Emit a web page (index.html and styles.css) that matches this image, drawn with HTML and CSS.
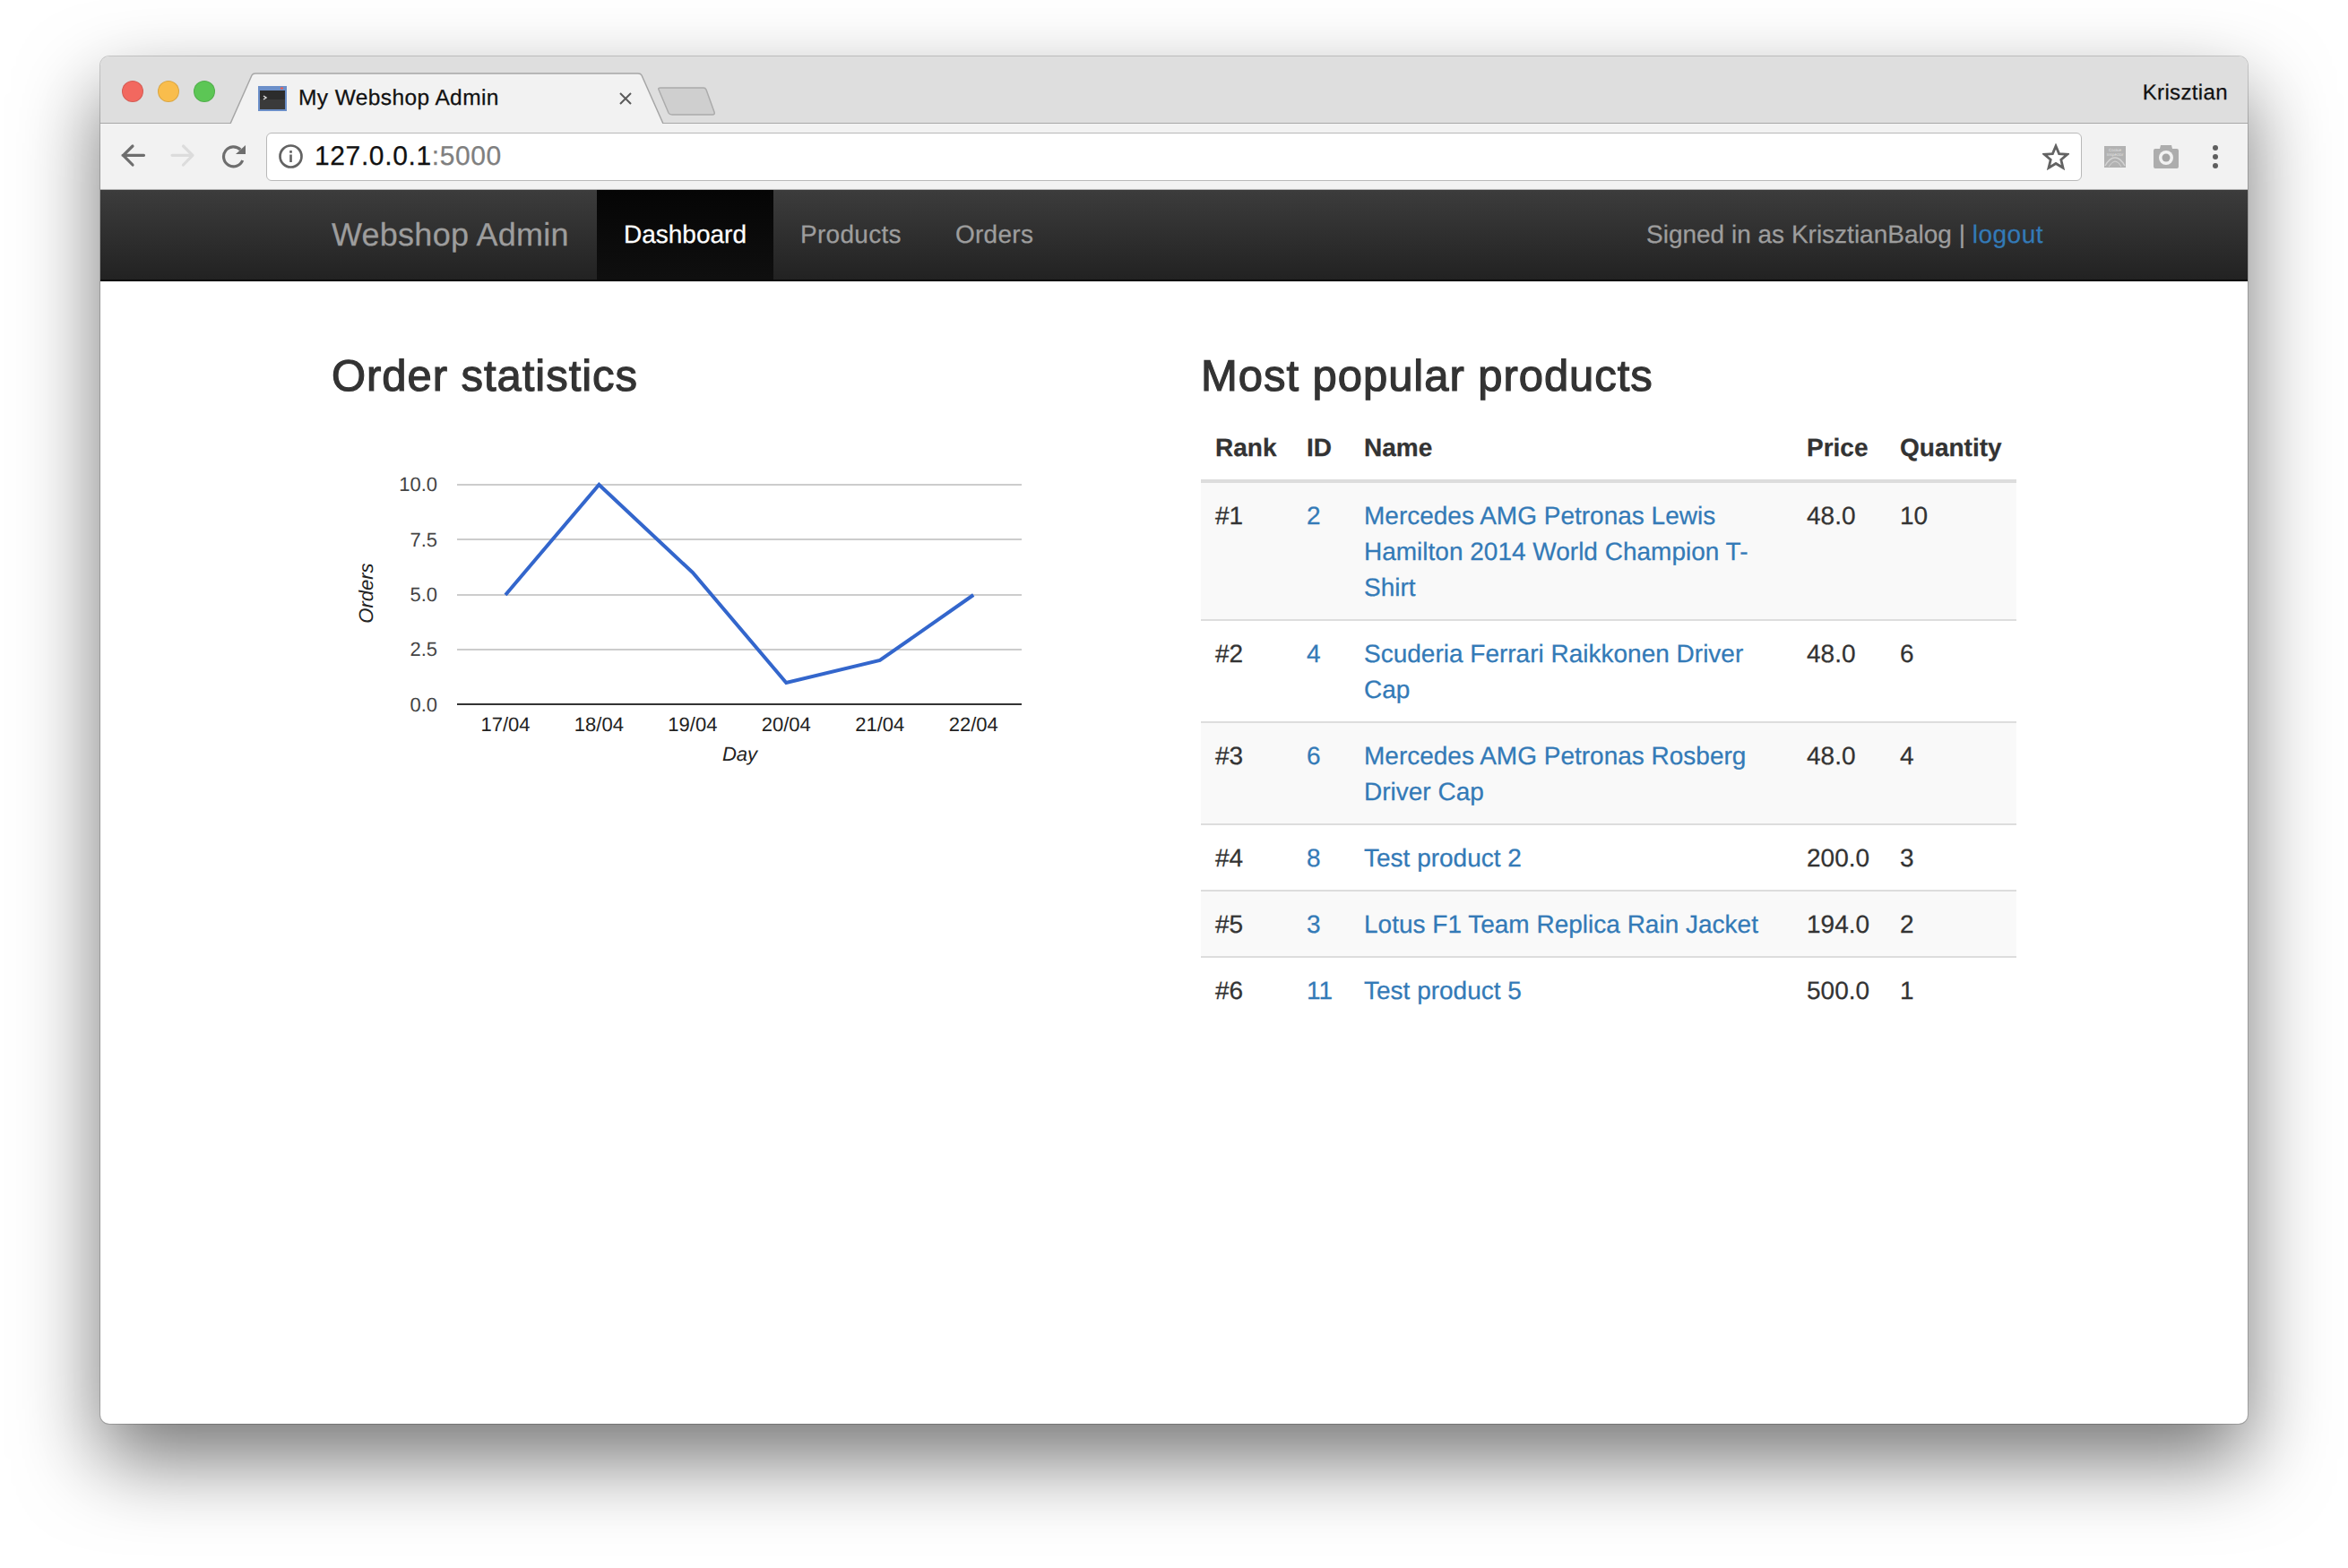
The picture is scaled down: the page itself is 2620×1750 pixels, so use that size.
FILE: index.html
```html
<!DOCTYPE html>
<html lang="en">
<head>
  <meta charset="UTF-8">
  <title>My Webshop Admin</title>
  <link rel="stylesheet" href="styles.css">
</head>
<body>
  <div class="window">
    <div class="titlebar">
      <div class="lights">
        <span class="light red"></span>
        <span class="light yellow"></span>
        <span class="light green"></span>
      </div>
      <div class="tab">
        <svg class="tab-shape" width="486" height="57" viewBox="0 0 486 57">
          <path d="M1 57 L25 3 Q26 1 29 1 L456 1 Q459 1 460 3 L484 57" fill="#f2f2f2" stroke="#a6a6a6" stroke-width="1.5"/>
        </svg>
        <svg class="favicon" width="32" height="28" viewBox="0 0 32 28">
          <rect width="32" height="28" fill="#6b8fc9"/>
          <rect x="2" y="5" width="28" height="21" fill="#2c2c2c"/>
          <rect x="2" y="15" width="28" height="11" fill="#3a3a3a"/>
          <path d="M6 11 L9 13 L6 15" fill="none" stroke="#ddd" stroke-width="1.5"/>
          <rect x="25" y="1.5" width="3" height="2" fill="#f05a4a"/>
        </svg>
        <span class="tab-title">My Webshop Admin</span>
        <svg class="tab-close" width="16" height="16" viewBox="0 0 16 16">
          <path d="M2 2 L14 14 M14 2 L2 14" stroke="#5a5a5a" stroke-width="2"/>
        </svg>
      </div>
      <svg class="newtab" width="66" height="33" viewBox="0 0 66 33">
        <path d="M2 3 Q1 1 4 1 L52 1 Q54 1 55 3 L64 28 Q65 31 62 31 L17 31 Q14 31 13 29 Z" fill="#cfcfcf" stroke="#ababab" stroke-width="1.5"/>
      </svg>
      <span class="username">Krisztian</span>
    </div>

    <div class="toolbar">
      <svg class="tool" width="32" height="32" viewBox="0 0 32 32">
        <path d="M28.500 14.300 H5 M16 4 L5.500 14.300 L16 25" fill="none" stroke="#6e6e6e" stroke-width="3.200" stroke-linecap="round" stroke-linejoin="round"/>
      </svg>
      <svg class="tool" width="32" height="32" viewBox="0 0 32 32">
        <path d="M4 14.300 H27 M16.500 4 L27 14.300 L16.500 25" fill="none" stroke="#dcdcdc" stroke-width="3.200" stroke-linecap="round" stroke-linejoin="round"/>
      </svg>
      <svg class="tool" width="32" height="32" viewBox="0 0 32 32">
        <path d="M26.700 20 A11 11 0 1 1 24.300 8" fill="none" stroke="#6e6e6e" stroke-width="3.200"/>
        <path d="M30 3 V13 H19 Z" fill="#6e6e6e"/>
      </svg>
      <div class="omnibox">
        <svg class="info" width="27" height="27" viewBox="0 0 27 27">
          <circle cx="13.500" cy="13.500" r="12" fill="none" stroke="#636363" stroke-width="2.700"/>
          <rect x="12.200" y="11.500" width="2.600" height="8.500" fill="#636363"/>
          <rect x="12.200" y="7" width="2.600" height="2.800" fill="#636363"/>
        </svg>
        <span class="url">127.0.0.1<span class="url-port">:5000</span></span>
        <svg class="star" width="30" height="30" viewBox="0 0 30 30">
          <path d="M15 3 L18.600 11.600 L27.800 12.300 L20.800 18.300 L23 27.300 L15 22.500 L7 27.300 L9.200 18.300 L2.200 12.300 L11.400 11.600 Z" fill="none" stroke="#636363" stroke-width="2.800"/>
        </svg>
      </div>
      <svg class="ext-cookie" width="24" height="24" viewBox="0 0 24 24">
        <rect width="24" height="24" fill="#b2b2b2"/>
        <text x="12" y="6" class="ext-text">Cookie</text>
        <text x="12" y="11" class="ext-text">Inspector</text>
        <path d="M1 22 Q6 13 12 13 Q18 13 23 22" fill="none" stroke="#d4d4d4" stroke-width="1.500"/>
        <path d="M5 23 Q9 17 12 17 Q16 17 19 23" fill="none" stroke="#d4d4d4"/>
      </svg>
      <svg class="ext-camera" width="30" height="27" viewBox="0 0 30 27">
        <path d="M1 7 Q1 5 3 5 H8 L9 1 H21 L22 5 H27 Q29 5 29 7 V25 Q29 27 27 27 H3 Q1 27 1 25 Z" fill="#adadad"/>
        <circle cx="15" cy="15" r="8" fill="#f2f2f2"/>
        <circle cx="15" cy="15" r="4.500" fill="#a4a4a4"/>
      </svg>
      <span class="dots"><i></i><i></i><i></i></span>
    </div>

    <nav class="navbar">
      <div class="container navbar-inner">
        <a class="brand">Webshop Admin</a>
        <a class="nav-link active">Dashboard</a>
        <a class="nav-link">Products</a>
        <a class="nav-link">Orders</a>
        <p class="signed-in">Signed in as KrisztianBalog | <a class="link logout">logout</a></p>
      </div>
    </nav>

    <main class="container columns">
      <section class="col">
        <h3>Order statistics</h3>
        <svg class="chart" width="880" height="420" viewBox="0 0 880 420">
          <g class="grid">
            <line x1="140" y1="77" x2="770" y2="77"/>
            <line x1="140" y1="138" x2="770" y2="138"/>
            <line x1="140" y1="200" x2="770" y2="200"/>
            <line x1="140" y1="261" x2="770" y2="261"/>
          </g>
          <line class="axis" x1="140" y1="322" x2="770" y2="322"/>
          <polyline class="series" points="194,200 298.400,77 402.900,175 507.300,298 611.800,273 716.200,200"/>
          <g class="ticks-y">
            <text x="118" y="84">10.0</text>
            <text x="118" y="146">7.5</text>
            <text x="118" y="207">5.0</text>
            <text x="118" y="268">2.5</text>
            <text x="118" y="330">0.0</text>
          </g>
          <g class="ticks-x">
            <text x="194" y="352">17/04</text>
            <text x="298.400" y="352">18/04</text>
            <text x="402.900" y="352">19/04</text>
            <text x="507.300" y="352">20/04</text>
            <text x="611.800" y="352">21/04</text>
            <text x="716.200" y="352">22/04</text>
          </g>
          <text class="axis-title" x="455.500" y="385">Day</text>
          <text class="axis-title" transform="translate(46 198) rotate(-90)">Orders</text>
        </svg>
      </section>
      <section class="col">
        <h3>Most popular products</h3>
        <table class="products">
          <thead>
            <tr>
              <th class="c-rank">Rank</th>
              <th class="c-id">ID</th>
              <th class="c-name">Name</th>
              <th class="c-price">Price</th>
              <th class="c-qty">Quantity</th>
            </tr>
          </thead>
          <tbody>
            <tr>
              <td>#1</td><td><a class="link">2</a></td>
              <td><a class="link">Mercedes AMG Petronas Lewis Hamilton 2014 World Champion T-Shirt</a></td>
              <td>48.0</td><td>10</td>
            </tr>
            <tr>
              <td>#2</td><td><a class="link">4</a></td>
              <td><a class="link">Scuderia Ferrari Raikkonen Driver Cap</a></td>
              <td>48.0</td><td>6</td>
            </tr>
            <tr>
              <td>#3</td><td><a class="link">6</a></td>
              <td><a class="link">Mercedes AMG Petronas Rosberg Driver Cap</a></td>
              <td>48.0</td><td>4</td>
            </tr>
            <tr>
              <td>#4</td><td><a class="link">8</a></td>
              <td><a class="link">Test product 2</a></td>
              <td>200.0</td><td>3</td>
            </tr>
            <tr>
              <td>#5</td><td><a class="link">3</a></td>
              <td><a class="link">Lotus F1 Team Replica Rain Jacket</a></td>
              <td>194.0</td><td>2</td>
            </tr>
            <tr>
              <td>#6</td><td><a class="link">11</a></td>
              <td><a class="link">Test product 5</a></td>
              <td>500.0</td><td>1</td>
            </tr>
          </tbody>
        </table>
      </section>
    </main>
  </div>
</body>
</html>
```

FILE: styles.css
```css
* {
  box-sizing: border-box;
}
body {
  margin: 0;
  height: 1750px;
  overflow: hidden;
  padding: 63px 0 0 112px;
  background-color: #fff;
  font-family: "Liberation Sans", Arial, sans-serif;
  font-size: 28px;
  line-height: 40px;
  color: #333;
  text-rendering: geometricPrecision;
  -webkit-text-stroke: 0.25px;
}

/* browser window */
.window {
  width: 2396px;
  height: 1526px;
  background-color: #fff;
  border-radius: 10px;
  box-shadow: 0 40px 90px rgba(0,0,0,0.54), 0 0 0 1px rgba(0,0,0,0.18);
}
.titlebar {
  display: flex;
  height: 75px;
  padding-left: 24px;
  background-color: #dedede;
  border-bottom: 1.5px solid #a8a8a8;
  border-radius: 10px 10px 0 0;
}
.lights {
  display: flex;
  gap: 16px;
  margin-top: 27px;
}
.light {
  width: 24px;
  height: 24px;
  border-radius: 50%;
  border: 1px solid rgba(0,0,0,0.12);
}
.red { background-color: #f2685f; }
.yellow { background-color: #f9bd4c; }
.green { background-color: #5cc655; }
.tab {
  position: relative;
  display: flex;
  align-items: center;
  width: 486px;
  height: 57px;
  margin: 18px 0 -1px 16px;
  padding: 0 36px 0 32px;
}
.tab-shape {
  position: absolute;
  left: 0;
  top: 0;
}
.favicon, .tab-title, .tab-close {
  position: relative;
}
.tab-title {
  margin-left: 13px;
  font-size: 24.500px;
  letter-spacing: 0.4px;
  color: #111;
}
.tab-close {
  margin-left: auto;
}
.newtab {
  margin: 34px 0 0 -9px;
}
.username {
  margin: 21px 22px 0 auto;
  font-size: 24px;
  letter-spacing: 0.37px;
  color: #111;
}

.toolbar {
  display: flex;
  align-items: center;
  height: 74px;
  padding-left: 20px;
  background-color: #f2f2f2;
  border-bottom: 1.5px solid #b4b4b4;
}
.tool {
  margin-right: 24px;
}
.tool:nth-child(3) {
  margin-right: 21px;
}
.omnibox {
  display: flex;
  align-items: center;
  width: 2026px;
  height: 54px;
  padding: 0 13px 0 13px;
  background-color: #fff;
  border: 1.5px solid #b9b9b9;
  border-radius: 6px;
}
.info {
  margin-right: 13px;
}
.url {
  font-size: 30px;
  letter-spacing: 0.62px;
  color: #111;
}
.url-port {
  color: #7f7f7f;
}
.star {
  margin-left: auto;
}
.ext-cookie {
  margin-left: 25px;
}
.ext-text {
  font-size: 4.500px;
  text-anchor: middle;
  fill: #e2e2e2;
  -webkit-text-stroke: 0;
}
.ext-camera {
  margin-left: 30px;
}
.dots {
  display: flex;
  flex-direction: column;
  gap: 4px;
  margin-left: 37px;
}
.dots i {
  display: block;
  width: 6px;
  height: 6px;
  border-radius: 50%;
  background-color: #5f5f5f;
}

/* navbar */
.container {
  width: 1940px;
  margin: 0 auto;
}
.navbar {
  height: 102px;
  background-image: linear-gradient(to bottom, #3c3c3c, #222);
  border-bottom: 2px solid #080808;
}
.navbar-inner {
  display: flex;
  height: 100px;
  padding-left: 30px;
  align-items: stretch;
  line-height: 100px;
  color: #9d9d9d;
}
.brand {
  width: 296px;
  font-size: 36px;
  letter-spacing: 0.25px;
}
.nav-link {
  padding: 0 30px;
  letter-spacing: 0.3px;
}
.nav-link.active {
  background-color: #080808;
  background-image: linear-gradient(to bottom, #050505, #0f0f0f);
  color: #fff;
  letter-spacing: 0;
}
.signed-in {
  margin: 0 0 0 auto;
}
.link {
  color: #337ab7;
}
.logout {
  letter-spacing: 0.5px;
}

/* page content */
.columns {
  display: flex;
}
.col {
  width: 970px;
  padding: 80px 30px 0;
}
h3 {
  margin: 0 0 16px;
  font-size: 49px;
  font-weight: 500;
  line-height: 53px;
  letter-spacing: 0.95px;
  color: #333;
  -webkit-text-stroke: 1.2px;
}
.chart {
  display: block;
  margin-top: 17px;
}
.grid line {
  stroke: #ccc;
  stroke-width: 2;
}
.axis {
  stroke: #333;
  stroke-width: 2;
}
.series {
  fill: none;
  stroke: #3366cc;
  stroke-width: 4;
}
.chart text {
  font-size: 22px;
  fill: #222;
}
.ticks-y text {
  text-anchor: end;
  fill: #444;
}
.ticks-x text {
  text-anchor: middle;
}
.chart .axis-title {
  font-style: italic;
  text-anchor: middle;
}

/* products table */
.products {
  width: 910px;
  table-layout: fixed;
  border-collapse: separate;
  border-spacing: 0;
}
.c-rank { width: 102px; }
.c-id { width: 64px; }
.c-name { width: 494px; }
.c-price { width: 104px; }
.c-qty { width: 146px; }
.products th {
  padding: 17px 16px 15px;
  text-align: left;
  border-bottom: 4px solid #ddd;
}
.products td {
  padding: 17px 16px 15px;
  vertical-align: top;
}
.products tbody tr + tr td {
  border-top: 2px solid #ddd;
}
.products tbody tr:nth-child(odd) {
  background-color: #f9f9f9;
}
```
